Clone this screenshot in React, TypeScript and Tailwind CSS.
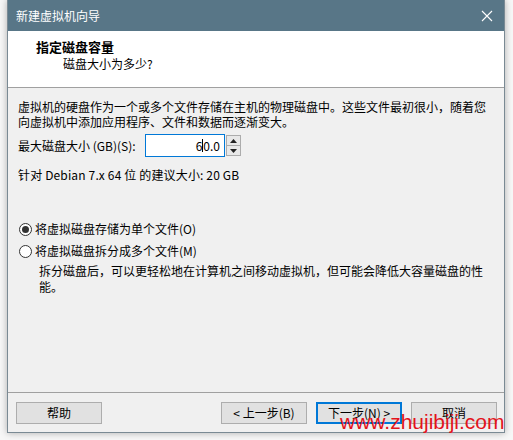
import React from "react";

const font = { fontFamily: '"Noto Sans CJK SC", "Noto Sans", sans-serif' };

function Btn({ children, primary }: { children: React.ReactNode; primary?: boolean }) {
  return (
    <div
      className={
        "w-[86px] h-[22px] flex items-center justify-center text-[12px] leading-none text-black bg-[#e1e1e1] " +
        (primary ? "border-2 border-[#0078d7]" : "border border-[#adadad]")
      }
    >
      {children}
    </div>
  );
}

export default function App() {
  return (
    <div className="w-[513px] h-[440px] bg-[#f7f7f7] relative overflow-hidden" style={font}>
      <div className="ml-[7px] w-[498px] h-[433px] flex flex-col border border-[#7a8a94] border-t-0 bg-[#f0f0f0] shadow-[0_0_7px_rgba(0,0,0,0.3)]">
        {/* title bar */}
        <div className="h-[31px] bg-[#587687] flex items-center justify-between pl-[8px] pr-[8px]">
          <span className="text-white text-[12px] leading-none">新建虚拟机向导</span>
          <svg width="12" height="12" viewBox="0 0 12 12" className="mr-[3px]">
            <path d="M1 1 L11 11 M11 1 L1 11" stroke="#ffffff" strokeWidth="1.1" />
          </svg>
        </div>
        {/* header */}
        <div className="h-[57px] bg-white border-b border-[#a0a0a0] flex flex-col pl-[28px] pt-[8px]">
          <span className="text-[13px] font-bold leading-[16px] text-black">指定磁盘容量</span>
          <span className="text-[12px] leading-[16px] text-black pl-[27px] mt-[1px]">磁盘大小为多少?</span>
        </div>
        {/* body */}
        <div className="flex-1 flex flex-col pl-[10px] pt-[11px] text-[12px] text-black">
          <p className="leading-[15px]">
            虚拟机的硬盘作为一个或多个文件存储在主机的物理磁盘中。这些文件最初很小，随着您
            <br />
            向虚拟机中添加应用程序、文件和数据而逐渐变大。
          </p>
          <div className="flex items-center mt-[5px] h-[23px]">
            <span className="w-[127px] leading-none">最大磁盘大小 (GB)(S):</span>
            <div className="w-[80px] h-[23px] border border-[#0078d7] bg-white flex items-center justify-end pr-[4px] leading-none">
              <span>6</span>
              <span className="inline-block w-px h-[13px] bg-black" />
              <span>0.0</span>
            </div>
            <div className="ml-[1px] w-[15px] h-[21px] flex flex-col border border-[#acacac] bg-[#e8e8e8]">
              <div className="flex-1 flex items-center justify-center border-b border-[#acacac]">
                <svg width="7" height="4" viewBox="0 0 7 4"><path d="M0 4 L3.5 0 L7 4 Z" fill="#222" /></svg>
              </div>
              <div className="flex-1 flex items-center justify-center">
                <svg width="7" height="4" viewBox="0 0 7 4"><path d="M0 0 L3.5 4 L7 0 Z" fill="#222" /></svg>
              </div>
            </div>
          </div>
          <span className="mt-[10px] leading-[15px] tracking-[0.15px]">针对 Debian 7.x 64 位 的建议大小: 20 GB</span>

          <div className="mt-[39px] flex items-center h-[16px]">
            <div className="w-[13px] h-[13px] rounded-full border border-[#333] bg-white flex items-center justify-center ml-[1px]">
              <div className="w-[7px] h-[7px] rounded-full bg-[#333]" />
            </div>
            <span className="ml-[3px] leading-none">将虚拟磁盘存储为单个文件(O)</span>
          </div>
          <div className="mt-[6px] flex items-center h-[16px]">
            <div className="w-[13px] h-[13px] rounded-full border border-[#333] bg-white ml-[1px]" />
            <span className="ml-[3px] leading-none">将虚拟磁盘拆分成多个文件(M)</span>
          </div>
          <p className="mt-[4px] pl-[21px] leading-[16px]">
            拆分磁盘后，可以更轻松地在计算机之间移动虚拟机，但可能会降低大容量磁盘的性
            <br />
            能。
          </p>
        </div>
        {/* footer */}
        <div className="h-[40px] border-t border-[#a0a0a0] flex items-center justify-between pl-[8px] pr-[7px]">
          <Btn>帮助</Btn>
          <div className="flex gap-[9px]">
            <Btn>&lt; 上一步(B)</Btn>
            <Btn primary>下一步(N) &gt;</Btn>
            <Btn>取消</Btn>
          </div>
        </div>
      </div>
      <span
        className="absolute left-[340px] top-[410px] text-[21px] leading-[24px] text-[#e3131b]"
        style={{ fontFamily: '"Liberation Sans", Arial, sans-serif' }}
      >
        www.zhujibiji.com
      </span>
    </div>
  );
}
